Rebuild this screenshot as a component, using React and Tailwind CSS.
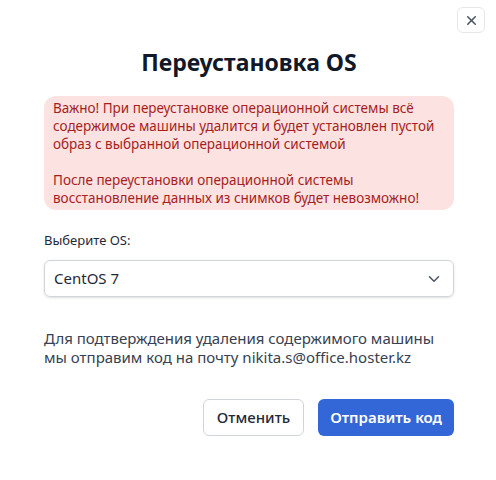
import { ChevronDown, X } from "lucide-react";

export default function App() {
  return (
    <div
      className="relative h-[480px] w-[496px] bg-white text-[#1f2937]"
      style={{ fontFamily: '"Noto Sans", "Open Sans", sans-serif' }}
    >
      <button
        type="button"
        className="absolute right-[11px] top-[7px] flex h-[26px] w-[28px] items-center justify-center rounded-md border border-[#e5e7eb] text-[#4b5563]"
      >
        <X size={15} strokeWidth={2.5} />
      </button>

      <div className="pl-[44px] pr-[42px] pt-[46px]">
        <h2 className="text-center text-[23px] font-bold leading-[32px] text-[#111827]">Переустановка OS</h2>

        <div className="mt-[18px] rounded-xl bg-[#fde2e2] px-[9px] py-[3px] text-[13.5px] leading-[18px] text-[#a61e1e]">
          <p>
            Важно! При переустановке операционной системы всё содержимое машины удалится и будет установлен пустой
            образ с выбранной операционной системой
          </p>
          <p className="mt-[18px]">
            После переустановки операционной системы восстановление данных из снимков будет невозможно!
          </p>
        </div>

        <label className="mt-[21px] block text-[13px] leading-[18px] text-[#1f2937]">Выберите OS:</label>
        <div className="mt-[11px] flex h-[37px] items-center justify-between rounded-md border border-[#d1d5db] pl-[9px] pr-[10px] shadow-sm">
          <span className="text-[15px] text-[#1f2937]">CentOS 7</span>
          <ChevronDown size={18} className="text-[#4b5563]" />
        </div>

        <p className="mt-[32px] text-[15px] leading-[19px] text-[#374151]">
          Для подтверждения удаления содержимого машины мы отправим код на почту nikita.s@office.hoster.kz
        </p>

        <div className="mt-[32px] flex justify-end gap-[14px]">
          <button
            type="button"
            className="h-[37px] rounded-md border border-[#d1d5db] bg-white px-[13px] text-[15px] font-medium text-[#1f2937]"
          >
            Отменить
          </button>
          <button
            type="button"
            className="h-[37px] rounded-md bg-[#3366d6] px-[12px] text-[15px] font-semibold text-white"
          >
            Отправить код
          </button>
        </div>
      </div>
    </div>
  );
}
